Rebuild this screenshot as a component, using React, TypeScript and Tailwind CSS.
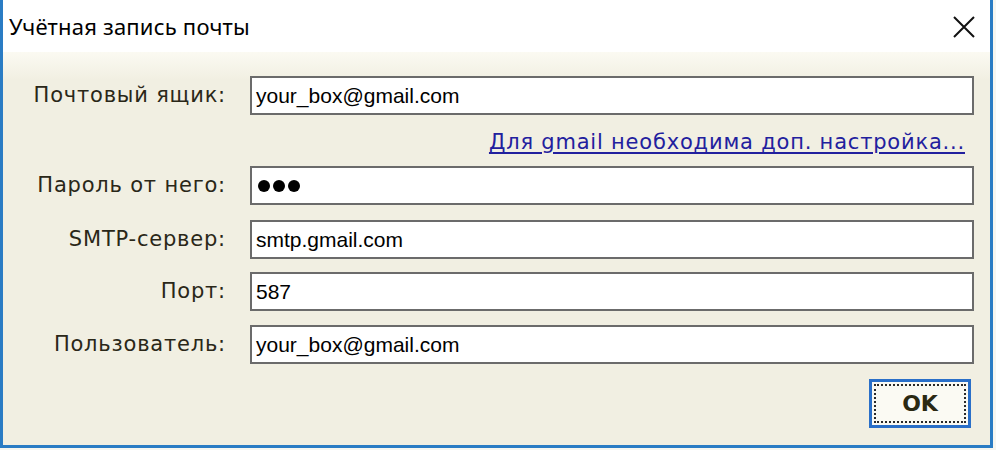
import React from "react";

const labelFont = { fontFamily: '"DejaVu Sans", Verdana, sans-serif' };
const fieldFont = { fontFamily: '"Liberation Sans", Arial, sans-serif' };

interface FieldRowProps {
  label: string;
  children: React.ReactNode;
}

const FieldRow = ({ label, children }: FieldRowProps) => (
  <div className="grid grid-cols-[223px_724px] gap-x-[24px] items-center">
    <span className="text-right text-[21px] text-[#2a2718] leading-none tracking-[0.8px]" style={labelFont}>
      {label}
    </span>
    <div
      className="h-[39px] border-2 border-[#6b6b6b] bg-white flex items-center pl-[4px] text-[21px] text-black"
      style={fieldFont}
    >
      {children}
    </div>
  </div>
);

export default function App() {
  return (
    <div className="w-[996px] h-[450px] bg-[#f6f6f0] overflow-hidden">
      <div className="w-[993px] h-[448px] border-l-[3px] border-r-[3px] border-b-[3px] border-[#2a7cc4] bg-white flex flex-col">
        <div className="h-[52px] flex items-center justify-between pl-[6px] pr-[15px] bg-white">
          <span
            className="text-[22px] text-black tracking-[0.2px]"
            style={{ fontFamily: '"Noto Sans", "Open Sans", sans-serif' }}
          >
            Учётная запись почты
          </span>
          <svg width="22" height="22" viewBox="0 0 22 22" className="mt-[2px]">
            <path d="M1 1 L21 21 M21 1 L1 21" stroke="#111" strokeWidth="2" fill="none" />
          </svg>
        </div>
        <div className="flex-1 flex flex-col pt-[24px] bg-[linear-gradient(to_bottom,#fbfaf2,#f1efe2_28px)]">
          <FieldRow label="Почтовый ящик:">your_box@gmail.com</FieldRow>
          <div className="h-[51px] flex items-center justify-end pr-[25px] pt-[4px]">
            <span
              className="text-[21px] text-[#22209e] underline underline-offset-[3px] leading-none tracking-[0.8px]"
              style={labelFont}
            >
              Для gmail необходима доп. настройка...
            </span>
          </div>
          <FieldRow label="Пароль от него:">
            <div className="flex gap-[3px] pl-[2px]">
              <span className="w-[12px] h-[12px] rounded-full bg-black" />
              <span className="w-[12px] h-[12px] rounded-full bg-black" />
              <span className="w-[12px] h-[12px] rounded-full bg-black" />
            </div>
          </FieldRow>
          <div className="h-[15px]" />
          <FieldRow label="SMTP-сервер:">smtp.gmail.com</FieldRow>
          <div className="h-[13px]" />
          <FieldRow label="Порт:">587</FieldRow>
          <div className="h-[14px]" />
          <FieldRow label="Пользователь:">your_box@gmail.com</FieldRow>
          <div className="flex justify-end pr-[19px] pt-[15px]">
            <div className="w-[102px] h-[49px] border-[3px] border-[#2a6fc8] bg-[#fbfaf3] p-[2px]">
              <div className="w-full h-full border-2 border-dotted border-[#2b2b2b] flex items-center justify-center">
                <span className="text-[22px] font-bold text-[#2b2912] leading-none" style={labelFont}>
                  OK
                </span>
              </div>
            </div>
          </div>
        </div>
      </div>
    </div>
  );
}
